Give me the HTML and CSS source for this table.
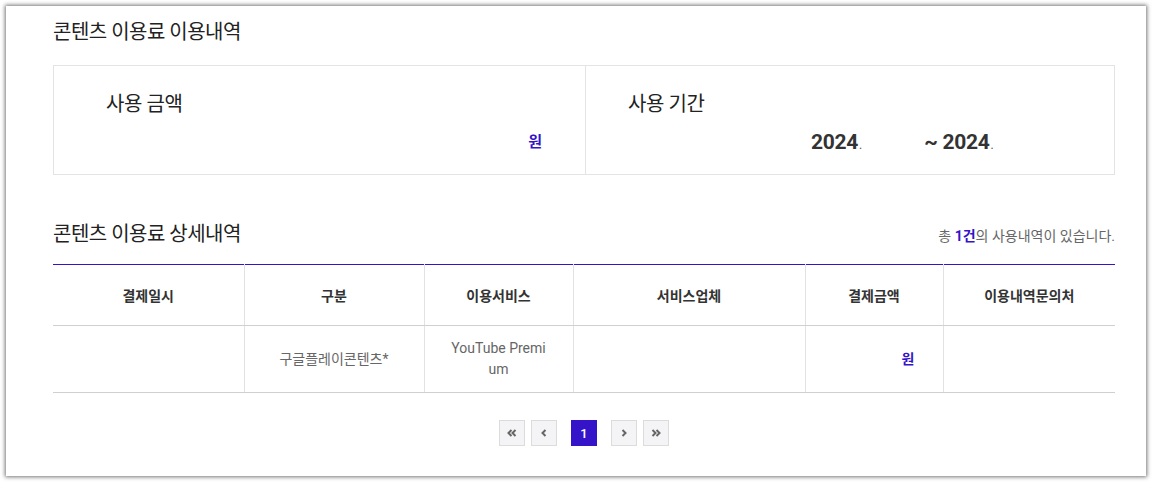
FILE: index.html
```html
<!DOCTYPE html>
<html lang="ko">
<head>
<meta charset="utf-8">
<link rel="stylesheet" href="styles.css">
</head>
<body>
<div class="panel">
  <h2 class="title">콘텐츠 이용료 이용내역</h2>
  <div class="summary">
    <div class="sum-cell sum-amount">
      <div class="sum-label">사용 금액</div>
      <div class="sum-value"><span class="won">원</span></div>
    </div>
    <div class="sum-cell sum-period">
      <div class="sum-label">사용 기간</div>
      <div class="sum-value dates"><span class="date"><b>2024</b><i>.</i></span><span class="date"><b>~ 2024</b><i>.</i></span></div>
    </div>
  </div>
  <div class="head2">
    <h2 class="title">콘텐츠 이용료 상세내역</h2>
    <p class="count">총 <strong>1건</strong>의 사용내역이 있습니다.</p>
  </div>
  <table class="grid">
    <colgroup>
      <col class="c1"><col class="c2"><col class="c3"><col class="c4"><col class="c5"><col class="c6">
    </colgroup>
    <thead>
      <tr><th>결제일시</th><th>구분</th><th>이용서비스</th><th>서비스업체</th><th>결제금액</th><th>이용내역문의처</th></tr>
    </thead>
    <tbody>
      <tr><td></td><td>구글플레이콘텐츠*</td><td class="svc">YouTube Premium</td><td></td><td class="amt"><span class="won">원</span></td><td></td></tr>
    </tbody>
  </table>
  <nav class="pager">
    <div class="pg-group">
      <span class="pg"><svg width="10" height="8" viewBox="0 0 10 8"><path d="M4.5 1L1.5 4l3 3M8.5 1l-3 3 3 3" fill="none" stroke="#666" stroke-width="2"/></svg></span>
      <span class="pg"><svg width="6" height="8" viewBox="0 0 6 8"><path d="M4.5 1L1.5 4l3 3" fill="none" stroke="#666" stroke-width="2"/></svg></span>
    </div>
    <span class="pg active">1</span>
    <div class="pg-group">
      <span class="pg"><svg width="6" height="8" viewBox="0 0 6 8"><path d="M1.5 1l3 3-3 3" fill="none" stroke="#666" stroke-width="2"/></svg></span>
      <span class="pg"><svg width="10" height="8" viewBox="0 0 10 8"><path d="M1.5 1l3 3-3 3M5.5 1l3 3-3 3" fill="none" stroke="#666" stroke-width="2"/></svg></span>
    </div>
  </nav>
</div>
</body>
</html>
```

FILE: styles.css
```css
html, body {
  margin: 0;
  padding: 0;
  background: #ffffff;
}
body {
  font-family: Roboto, "Noto Sans CJK KR", "Noto Sans", sans-serif;
  color: #333;
  padding: 6px;
  width: 1140px;
}
.panel {
  background: #fff;
  height: 470px;
  box-sizing: border-box;
  box-shadow: 0 0 4px 1px rgba(0, 0, 0, 0.55);
  padding: 12px 31px 0 47px;
}
.title {
  margin: 0;
  font-size: 20px;
  line-height: 28px;
  font-weight: 400;
  color: #222;
  letter-spacing: -0.5px;
}
.summary {
  display: flex;
  margin-top: 19px;
  border: 1px solid #e4e4e4;
  height: 110px;
  box-sizing: border-box;
}
.sum-cell {
  box-sizing: border-box;
  padding-top: 24px;
}
.sum-amount {
  flex: 0 0 532px;
  padding-left: 52px;
  padding-right: 43px;
  border-right: 1px solid #e4e4e4;
}
.sum-period {
  flex: 1;
  padding-left: 42px;
}
.sum-label {
  font-size: 20px;
  line-height: 28px;
  color: #222;
  letter-spacing: -0.4px;
}
.sum-value {
  margin-top: 10px;
  line-height: 28px;
  text-align: right;
}
.won {
  color: #3413c9;
  font-weight: 700;
  font-size: 15px;
}
.dates {
  text-align: left;
  padding-left: 183px;
  display: flex;
  gap: 62px;
}
.date b {
  font-size: 21px;
  font-weight: 700;
  color: #333;
  letter-spacing: -0.3px;
}
.date i {
  font-style: normal;
  font-size: 12px;
  color: #555;
  margin-left: 1px;
}
.head2 {
  display: flex;
  justify-content: space-between;
  align-items: flex-end;
  margin-top: 45px;
}
.count {
  margin: 0 0 3px;
  font-size: 14px;
  color: #666;
  letter-spacing: 0;
}
.count strong {
  color: #3413c9;
  font-weight: 700;
}
.grid {
  width: 1062px;
  margin-top: 16px;
  border-collapse: collapse;
  table-layout: fixed;
  border-top: 1px solid #3413c9;
}
.c1 { width: 191px; }
.c2 { width: 180px; }
.c3 { width: 149px; }
.c4 { width: 232px; }
.c5 { width: 138px; }
.c6 { width: 172px; }
.grid th {
  height: 60px;
  font-size: 14px;
  font-weight: 700;
  color: #333;
  border-bottom: 1px solid #d0d0d0;
  border-left: 1px solid #e2e2e2;
  padding: 0;
}
.grid td {
  height: 66px;
  font-size: 14px;
  color: #666;
  text-align: center;
  line-height: 21px;
  border-bottom: 1px solid #d0d0d0;
  border-left: 1px solid #e2e2e2;
  padding: 0;
}
.grid th:first-child, .grid td:first-child {
  border-left: none;
}
.grid td.svc {
  padding: 0 26px;
  word-break: break-all;
}
.grid td.amt {
  text-align: right;
  padding-right: 28px;
}
.grid td.amt .won {
  font-size: 14px;
}
.pager {
  display: flex;
  justify-content: center;
  align-items: center;
  gap: 14px;
  margin-top: 27px;
  padding-right: 0;
}
.pg-group {
  display: flex;
  gap: 6px;
}
.pg {
  width: 26px;
  height: 26px;
  box-sizing: border-box;
  border: 1px solid #dcdcdc;
  background: #f4f4f6;
  display: flex;
  align-items: center;
  justify-content: center;
}
.pg.active {
  background: #3413c9;
  border-color: #3413c9;
  color: #fff;
  font-size: 13px;
  font-weight: 500;
}
```
